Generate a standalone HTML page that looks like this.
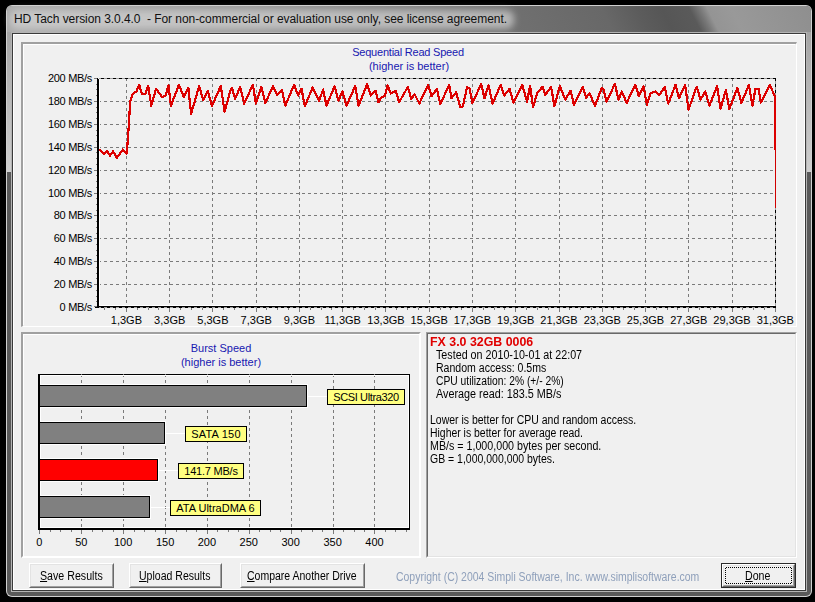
<!DOCTYPE html>
<html><head><meta charset="utf-8"><style>
*{margin:0;padding:0;box-sizing:border-box}
html,body{width:815px;height:602px;overflow:hidden;background:#000}
body{position:relative;font-family:"Liberation Sans",sans-serif}
.a{position:absolute}
.t{position:absolute;white-space:pre;font-size:11px;line-height:13px;color:#000}
</style></head><body>

<svg class="a" style="left:0;top:0" width="815" height="602">
<defs>
<linearGradient id="tb" gradientUnits="userSpaceOnUse" x1="0" y1="0" x2="815" y2="0" gradientTransform="skewX(27)">
<stop offset="0.0000" stop-color="#acacac"/>
<stop offset="0.3031" stop-color="#989898"/>
<stop offset="0.6160" stop-color="#707070"/>
<stop offset="0.7325" stop-color="#686868"/>
<stop offset="0.7755" stop-color="#5c5c5c"/>
<stop offset="0.8061" stop-color="#565656"/>
<stop offset="0.8405" stop-color="#5a5a5a"/>
<stop offset="0.8528" stop-color="#787878"/>
<stop offset="0.8626" stop-color="#949494"/>
<stop offset="0.8920" stop-color="#999999"/>
<stop offset="0.9963" stop-color="#8e8e8e"/>
</linearGradient>
<linearGradient id="side" x1="0" y1="0" x2="0" y2="1">
<stop offset="0" stop-color="#a4a4a4"/>
<stop offset="1" stop-color="#cfcfcf"/>
</linearGradient>
<filter id="gl" x="-10%" y="-50%" width="120%" height="200%"><feGaussianBlur stdDeviation="3.5"/></filter>
</defs>
<rect x="6" y="5" width="806" height="592" rx="6" ry="6" fill="#d0d0d0"/>
<rect x="7" y="6" width="804" height="590" rx="5" ry="5" fill="#5a5a5a"/>
<path d="M7 32 V11 Q7 6 12 6 H806 Q811 6 811 11 V32 Z" fill="url(#tb)"/>
<rect x="10" y="10" width="504" height="19" rx="8" fill="#d4d4d4" opacity="0.7" filter="url(#gl)"/>
<rect x="7" y="32" width="4" height="140" fill="url(#side)"/>
<rect x="807" y="32" width="4" height="140" fill="url(#side)"/>
<rect x="11" y="32" width="796" height="560" fill="#b4b4b4"/>
<rect x="12" y="33" width="794" height="558" fill="#3a3a3a"/>
<rect x="13" y="34" width="792" height="556" fill="#ffffff"/>
<rect x="14" y="35" width="790" height="554" fill="#f0f0f0"/>
</svg>
<div class="t" style="left:14px;top:12px;font-size:12px;line-height:14px;letter-spacing:-0.06px;color:#101010">HD Tach version 3.0.4.0  - For non-commercial or evaluation use only, see license agreement.</div>
<div class="a" style="left:21px;top:42px;width:776px;height:285px;border-top:2px solid #a0a0a0;border-left:2px solid #a0a0a0;border-right:1px solid #fff;border-bottom:1px solid #fff"></div>
<div class="a" style="left:23px;top:44px;width:772px;height:281px;border-top:1px solid #fff;border-left:1px solid #fff"></div>
<div class="a" style="left:21px;top:332px;width:400px;height:226px;border-top:2px solid #a0a0a0;border-left:2px solid #a0a0a0;border-right:2px solid #fff;border-bottom:2px solid #fff"></div>
<div class="a" style="left:23px;top:334px;width:396px;height:222px;border-top:1px solid #fff;border-left:1px solid #fff"></div>
<div class="a" style="left:426px;top:332px;width:371px;height:226px;border-top:1px solid #a0a0a0;border-left:1px solid #a0a0a0;border-right:1px solid #fff;border-bottom:1px solid #fff"></div>
<div class="a" style="left:427px;top:333px;width:369px;height:224px;border-top:1px solid #696969;border-left:1px solid #696969;border-right:1px solid #e3e3e3;border-bottom:1px solid #e3e3e3"></div>
<svg class="a" style="left:0;top:0" width="815" height="602">
<g shape-rendering="crispEdges">
<line x1="98" y1="101.5" x2="775" y2="101.5" stroke="#7a7a7a" stroke-width="1" stroke-dasharray="3 3"/>
<line x1="98" y1="124.5" x2="775" y2="124.5" stroke="#7a7a7a" stroke-width="1" stroke-dasharray="3 3"/>
<line x1="98" y1="147.5" x2="775" y2="147.5" stroke="#7a7a7a" stroke-width="1" stroke-dasharray="3 3"/>
<line x1="98" y1="170.5" x2="775" y2="170.5" stroke="#7a7a7a" stroke-width="1" stroke-dasharray="3 3"/>
<line x1="98" y1="193.5" x2="775" y2="193.5" stroke="#7a7a7a" stroke-width="1" stroke-dasharray="3 3"/>
<line x1="98" y1="215.5" x2="775" y2="215.5" stroke="#7a7a7a" stroke-width="1" stroke-dasharray="3 3"/>
<line x1="98" y1="238.5" x2="775" y2="238.5" stroke="#7a7a7a" stroke-width="1" stroke-dasharray="3 3"/>
<line x1="98" y1="261.5" x2="775" y2="261.5" stroke="#7a7a7a" stroke-width="1" stroke-dasharray="3 3"/>
<line x1="98" y1="284.5" x2="775" y2="284.5" stroke="#7a7a7a" stroke-width="1" stroke-dasharray="3 3"/>
<line x1="126.5" y1="78" x2="126.5" y2="306" stroke="#7a7a7a" stroke-width="1" stroke-dasharray="3 3"/>
<line x1="169.5" y1="78" x2="169.5" y2="306" stroke="#7a7a7a" stroke-width="1" stroke-dasharray="3 3"/>
<line x1="212.5" y1="78" x2="212.5" y2="306" stroke="#7a7a7a" stroke-width="1" stroke-dasharray="3 3"/>
<line x1="256.5" y1="78" x2="256.5" y2="306" stroke="#7a7a7a" stroke-width="1" stroke-dasharray="3 3"/>
<line x1="299.5" y1="78" x2="299.5" y2="306" stroke="#7a7a7a" stroke-width="1" stroke-dasharray="3 3"/>
<line x1="342.5" y1="78" x2="342.5" y2="306" stroke="#7a7a7a" stroke-width="1" stroke-dasharray="3 3"/>
<line x1="385.5" y1="78" x2="385.5" y2="306" stroke="#7a7a7a" stroke-width="1" stroke-dasharray="3 3"/>
<line x1="429.5" y1="78" x2="429.5" y2="306" stroke="#7a7a7a" stroke-width="1" stroke-dasharray="3 3"/>
<line x1="472.5" y1="78" x2="472.5" y2="306" stroke="#7a7a7a" stroke-width="1" stroke-dasharray="3 3"/>
<line x1="515.5" y1="78" x2="515.5" y2="306" stroke="#7a7a7a" stroke-width="1" stroke-dasharray="3 3"/>
<line x1="559.5" y1="78" x2="559.5" y2="306" stroke="#7a7a7a" stroke-width="1" stroke-dasharray="3 3"/>
<line x1="602.5" y1="78" x2="602.5" y2="306" stroke="#7a7a7a" stroke-width="1" stroke-dasharray="3 3"/>
<line x1="645.5" y1="78" x2="645.5" y2="306" stroke="#7a7a7a" stroke-width="1" stroke-dasharray="3 3"/>
<line x1="688.5" y1="78" x2="688.5" y2="306" stroke="#7a7a7a" stroke-width="1" stroke-dasharray="3 3"/>
<line x1="732.5" y1="78" x2="732.5" y2="306" stroke="#7a7a7a" stroke-width="1" stroke-dasharray="3 3"/>
<rect x="99" y="78" width="677" height="1" fill="#a0a0a0"/>
<line x1="95" y1="78.5" x2="776" y2="78.5" stroke="#000" stroke-width="1" stroke-dasharray="3 3"/>
<rect x="775" y="78" width="1" height="229" fill="#a0a0a0"/>
<line x1="775.5" y1="78" x2="775.5" y2="306" stroke="#000" stroke-width="1" stroke-dasharray="3 3"/>
<rect x="94" y="78" width="3" height="1" fill="#7a7a7a"/>
<rect x="96" y="84" width="1" height="1" fill="#7a7a7a"/>
<rect x="96" y="89" width="1" height="1" fill="#7a7a7a"/>
<rect x="96" y="95" width="1" height="1" fill="#7a7a7a"/>
<rect x="94" y="101" width="3" height="1" fill="#7a7a7a"/>
<rect x="96" y="107" width="1" height="1" fill="#7a7a7a"/>
<rect x="96" y="112" width="1" height="1" fill="#7a7a7a"/>
<rect x="96" y="118" width="1" height="1" fill="#7a7a7a"/>
<rect x="94" y="124" width="3" height="1" fill="#7a7a7a"/>
<rect x="96" y="130" width="1" height="1" fill="#7a7a7a"/>
<rect x="96" y="135" width="1" height="1" fill="#7a7a7a"/>
<rect x="96" y="141" width="1" height="1" fill="#7a7a7a"/>
<rect x="94" y="147" width="3" height="1" fill="#7a7a7a"/>
<rect x="96" y="152" width="1" height="1" fill="#7a7a7a"/>
<rect x="96" y="158" width="1" height="1" fill="#7a7a7a"/>
<rect x="96" y="164" width="1" height="1" fill="#7a7a7a"/>
<rect x="94" y="170" width="3" height="1" fill="#7a7a7a"/>
<rect x="96" y="175" width="1" height="1" fill="#7a7a7a"/>
<rect x="96" y="181" width="1" height="1" fill="#7a7a7a"/>
<rect x="96" y="187" width="1" height="1" fill="#7a7a7a"/>
<rect x="94" y="193" width="3" height="1" fill="#7a7a7a"/>
<rect x="96" y="198" width="1" height="1" fill="#7a7a7a"/>
<rect x="96" y="204" width="1" height="1" fill="#7a7a7a"/>
<rect x="96" y="210" width="1" height="1" fill="#7a7a7a"/>
<rect x="94" y="215" width="3" height="1" fill="#7a7a7a"/>
<rect x="96" y="221" width="1" height="1" fill="#7a7a7a"/>
<rect x="96" y="227" width="1" height="1" fill="#7a7a7a"/>
<rect x="96" y="233" width="1" height="1" fill="#7a7a7a"/>
<rect x="94" y="238" width="3" height="1" fill="#7a7a7a"/>
<rect x="96" y="244" width="1" height="1" fill="#7a7a7a"/>
<rect x="96" y="250" width="1" height="1" fill="#7a7a7a"/>
<rect x="96" y="255" width="1" height="1" fill="#7a7a7a"/>
<rect x="94" y="261" width="3" height="1" fill="#7a7a7a"/>
<rect x="96" y="267" width="1" height="1" fill="#7a7a7a"/>
<rect x="96" y="273" width="1" height="1" fill="#7a7a7a"/>
<rect x="96" y="278" width="1" height="1" fill="#7a7a7a"/>
<rect x="94" y="284" width="3" height="1" fill="#7a7a7a"/>
<rect x="96" y="290" width="1" height="1" fill="#7a7a7a"/>
<rect x="96" y="296" width="1" height="1" fill="#7a7a7a"/>
<rect x="96" y="301" width="1" height="1" fill="#7a7a7a"/>
<rect x="94" y="306" width="3" height="1" fill="#7a7a7a"/>
<rect x="126" y="308" width="1" height="4" fill="#7a7a7a"/>
<rect x="169" y="308" width="1" height="4" fill="#7a7a7a"/>
<rect x="212" y="308" width="1" height="4" fill="#7a7a7a"/>
<rect x="256" y="308" width="1" height="4" fill="#7a7a7a"/>
<rect x="299" y="308" width="1" height="4" fill="#7a7a7a"/>
<rect x="342" y="308" width="1" height="4" fill="#7a7a7a"/>
<rect x="385" y="308" width="1" height="4" fill="#7a7a7a"/>
<rect x="429" y="308" width="1" height="4" fill="#7a7a7a"/>
<rect x="472" y="308" width="1" height="4" fill="#7a7a7a"/>
<rect x="515" y="308" width="1" height="4" fill="#7a7a7a"/>
<rect x="559" y="308" width="1" height="4" fill="#7a7a7a"/>
<rect x="602" y="308" width="1" height="4" fill="#7a7a7a"/>
<rect x="645" y="308" width="1" height="4" fill="#7a7a7a"/>
<rect x="688" y="308" width="1" height="4" fill="#7a7a7a"/>
<rect x="732" y="308" width="1" height="4" fill="#7a7a7a"/>
<rect x="775" y="308" width="1" height="4" fill="#7a7a7a"/>
<rect x="104" y="308" width="1" height="2" fill="#7a7a7a"/>
<rect x="115" y="308" width="1" height="2" fill="#7a7a7a"/>
<rect x="137" y="308" width="1" height="2" fill="#7a7a7a"/>
<rect x="148" y="308" width="1" height="2" fill="#7a7a7a"/>
<rect x="158" y="308" width="1" height="2" fill="#7a7a7a"/>
<rect x="180" y="308" width="1" height="2" fill="#7a7a7a"/>
<rect x="191" y="308" width="1" height="2" fill="#7a7a7a"/>
<rect x="202" y="308" width="1" height="2" fill="#7a7a7a"/>
<rect x="223" y="308" width="1" height="2" fill="#7a7a7a"/>
<rect x="234" y="308" width="1" height="2" fill="#7a7a7a"/>
<rect x="245" y="308" width="1" height="2" fill="#7a7a7a"/>
<rect x="266" y="308" width="1" height="2" fill="#7a7a7a"/>
<rect x="277" y="308" width="1" height="2" fill="#7a7a7a"/>
<rect x="288" y="308" width="1" height="2" fill="#7a7a7a"/>
<rect x="310" y="308" width="1" height="2" fill="#7a7a7a"/>
<rect x="321" y="308" width="1" height="2" fill="#7a7a7a"/>
<rect x="331" y="308" width="1" height="2" fill="#7a7a7a"/>
<rect x="353" y="308" width="1" height="2" fill="#7a7a7a"/>
<rect x="364" y="308" width="1" height="2" fill="#7a7a7a"/>
<rect x="375" y="308" width="1" height="2" fill="#7a7a7a"/>
<rect x="396" y="308" width="1" height="2" fill="#7a7a7a"/>
<rect x="407" y="308" width="1" height="2" fill="#7a7a7a"/>
<rect x="418" y="308" width="1" height="2" fill="#7a7a7a"/>
<rect x="440" y="308" width="1" height="2" fill="#7a7a7a"/>
<rect x="450" y="308" width="1" height="2" fill="#7a7a7a"/>
<rect x="461" y="308" width="1" height="2" fill="#7a7a7a"/>
<rect x="483" y="308" width="1" height="2" fill="#7a7a7a"/>
<rect x="494" y="308" width="1" height="2" fill="#7a7a7a"/>
<rect x="504" y="308" width="1" height="2" fill="#7a7a7a"/>
<rect x="526" y="308" width="1" height="2" fill="#7a7a7a"/>
<rect x="537" y="308" width="1" height="2" fill="#7a7a7a"/>
<rect x="548" y="308" width="1" height="2" fill="#7a7a7a"/>
<rect x="569" y="308" width="1" height="2" fill="#7a7a7a"/>
<rect x="580" y="308" width="1" height="2" fill="#7a7a7a"/>
<rect x="591" y="308" width="1" height="2" fill="#7a7a7a"/>
<rect x="613" y="308" width="1" height="2" fill="#7a7a7a"/>
<rect x="623" y="308" width="1" height="2" fill="#7a7a7a"/>
<rect x="634" y="308" width="1" height="2" fill="#7a7a7a"/>
<rect x="656" y="308" width="1" height="2" fill="#7a7a7a"/>
<rect x="667" y="308" width="1" height="2" fill="#7a7a7a"/>
<rect x="677" y="308" width="1" height="2" fill="#7a7a7a"/>
<rect x="699" y="308" width="1" height="2" fill="#7a7a7a"/>
<rect x="710" y="308" width="1" height="2" fill="#7a7a7a"/>
<rect x="721" y="308" width="1" height="2" fill="#7a7a7a"/>
<rect x="742" y="308" width="1" height="2" fill="#7a7a7a"/>
<rect x="753" y="308" width="1" height="2" fill="#7a7a7a"/>
<rect x="764" y="308" width="1" height="2" fill="#7a7a7a"/>
<rect x="99" y="79" width="1" height="227" fill="#fff"/>
<rect x="99" y="305" width="676" height="1" fill="#fff"/>
<rect x="97" y="79" width="2" height="229" fill="#000"/>
<rect x="97" y="306" width="679" height="1" fill="#000"/>
<rect x="99" y="307" width="677" height="1" fill="#a0a0a0"/>
<line x1="95" y1="307.5" x2="776" y2="307.5" stroke="#000" stroke-width="1" stroke-dasharray="3 3"/>
</g>
<path d="M99.0 149.2 L103.9 153.8 L107.0 151.0 L110.0 155.6 L113.1 151.3 L116.8 157.8 L122.9 149.5 L126.9 153.5 L127.9 137.8 L129.0 122.5 L130.1 102.3 L132.4 94.2 L134.4 92.2 L136.5 91.5 L139.2 84.7 L141.9 94.2 L145.2 94.2 L148.2 86.1 L151.3 105.7 L156.0 88.8 L162.1 96.9 L165.5 95.5 L168.5 85.4 L170.9 105.7 L179.0 84.7 L183.7 96.9 L188.4 88.1 L191.1 113.8 L199.2 86.1 L203.3 100.3 L207.6 90.8 L212.0 105.7 L220.8 86.1 L224.6 111.7 L230.9 88.8 L232.0 88.1 L235.1 98.9 L240.1 86.8 L244.2 103.6 L252.9 84.7 L255.9 103.6 L261.3 86.8 L265.4 103.0 L272.9 86.1 L277.0 94.9 L282.0 90.1 L285.3 105.7 L294.1 84.7 L298.2 95.5 L301.5 88.8 L304.9 106.3 L312.6 87.4 L319.1 100.9 L323.1 89.5 L326.5 105.7 L334.6 86.1 L338.4 100.9 L342.4 91.5 L346.5 105.7 L355.2 86.1 L358.6 105.7 L367.1 84.1 L370.8 95.5 L375.5 90.8 L378.5 102.3 L381.6 96.9 L384.9 96.2 L387.4 85.4 L391.0 93.5 L395.7 90.8 L399.1 102.3 L407.9 86.8 L411.2 98.9 L414.6 94.2 L419.3 103.6 L428.1 84.7 L431.5 96.2 L436.9 88.8 L440.3 104.3 L449.2 84.7 L451.5 98.2 L456.2 92.2 L460.2 107.0 L462.9 106.3 L467.0 87.4 L469.4 88.1 L472.4 103.0 L481.2 84.1 L484.5 98.2 L488.6 85.4 L492.6 103.6 L500.7 84.7 L504.1 95.5 L509.5 88.8 L513.5 103.0 L522.3 84.7 L527.0 101.6 L530.1 86.1 L533.1 107.0 L537.2 92.8 L542.6 86.8 L545.3 94.9 L551.1 86.8 L554.4 106.3 L559.8 86.1 L565.2 99.6 L570.6 90.8 L574.0 105.0 L582.8 86.8 L586.2 97.6 L589.5 93.5 L595.0 105.7 L601.7 88.1 L603.7 89.5 L606.4 101.6 L614.9 84.1 L618.5 99.6 L621.9 91.5 L626.6 103.0 L635.4 84.7 L638.8 96.2 L643.5 86.1 L646.9 105.0 L650.3 93.5 L655.4 91.5 L659.4 94.9 L664.8 86.8 L668.2 103.6 L675.6 84.7 L679.0 98.2 L685.1 84.7 L688.5 109.7 L696.6 86.8 L700.6 99.6 L705.3 91.5 L709.4 105.7 L717.1 86.1 L720.5 109.0 L725.9 90.1 L729.3 109.0 L737.4 88.1 L741.4 103.0 L748.9 85.0 L752.5 105.7 L755.4 88.9 L758.6 88.9 L760.9 102.6 L770.0 85.0 L773.6 93.6 L774.6 96.2 L775.0 150.0" fill="none" stroke="#dc0000" stroke-width="2.2" stroke-linejoin="round" shape-rendering="crispEdges"/>
<rect x="775" y="150" width="1" height="58" fill="#d00000" shape-rendering="crispEdges"/>
</svg>
<div class="t" style="left:322px;top:46px;width:172px;text-align:center;color:#1818b0;letter-spacing:-0.22px">Sequential Read Speed</div>
<div class="t" style="left:323px;top:60px;width:172px;text-align:center;color:#1818b0">(higher is better)</div>
<div class="t" style="left:22px;top:72px;width:70px;text-align:right;letter-spacing:-0.3px">200 MB/s</div>
<div class="t" style="left:22px;top:95px;width:70px;text-align:right;letter-spacing:-0.3px">180 MB/s</div>
<div class="t" style="left:22px;top:118px;width:70px;text-align:right;letter-spacing:-0.3px">160 MB/s</div>
<div class="t" style="left:22px;top:141px;width:70px;text-align:right;letter-spacing:-0.3px">140 MB/s</div>
<div class="t" style="left:22px;top:164px;width:70px;text-align:right;letter-spacing:-0.3px">120 MB/s</div>
<div class="t" style="left:22px;top:187px;width:70px;text-align:right;letter-spacing:-0.3px">100 MB/s</div>
<div class="t" style="left:22px;top:209px;width:70px;text-align:right;letter-spacing:-0.3px">80 MB/s</div>
<div class="t" style="left:22px;top:232px;width:70px;text-align:right;letter-spacing:-0.3px">60 MB/s</div>
<div class="t" style="left:22px;top:255px;width:70px;text-align:right;letter-spacing:-0.3px">40 MB/s</div>
<div class="t" style="left:22px;top:278px;width:70px;text-align:right;letter-spacing:-0.3px">20 MB/s</div>
<div class="t" style="left:22px;top:301px;width:70px;text-align:right;letter-spacing:-0.3px">0 MB/s</div>
<div class="t" style="left:96.4px;top:314px;width:60px;text-align:center">1,3GB</div>
<div class="t" style="left:139.7px;top:314px;width:60px;text-align:center">3,3GB</div>
<div class="t" style="left:182.9px;top:314px;width:60px;text-align:center">5,3GB</div>
<div class="t" style="left:226.2px;top:314px;width:60px;text-align:center">7,3GB</div>
<div class="t" style="left:269.4px;top:314px;width:60px;text-align:center">9,3GB</div>
<div class="t" style="left:312.7px;top:314px;width:60px;text-align:center">11,3GB</div>
<div class="t" style="left:356.0px;top:314px;width:60px;text-align:center">13,3GB</div>
<div class="t" style="left:399.2px;top:314px;width:60px;text-align:center">15,3GB</div>
<div class="t" style="left:442.5px;top:314px;width:60px;text-align:center">17,3GB</div>
<div class="t" style="left:485.7px;top:314px;width:60px;text-align:center">19,3GB</div>
<div class="t" style="left:529.0px;top:314px;width:60px;text-align:center">21,3GB</div>
<div class="t" style="left:572.3px;top:314px;width:60px;text-align:center">23,3GB</div>
<div class="t" style="left:615.5px;top:314px;width:60px;text-align:center">25,3GB</div>
<div class="t" style="left:658.8px;top:314px;width:60px;text-align:center">27,3GB</div>
<div class="t" style="left:702.0px;top:314px;width:60px;text-align:center">29,3GB</div>
<div class="t" style="left:745.3px;top:314px;width:60px;text-align:center">31,3GB</div>
<svg class="a" style="left:0;top:0" width="815" height="602"><g shape-rendering="crispEdges">
<rect x="38" y="374" width="372" height="1" fill="#000"/>
<rect x="409" y="374" width="1" height="156" fill="#000"/>
<line x1="81.5" y1="374" x2="81.5" y2="528" stroke="#7a7a7a" stroke-width="1" stroke-dasharray="3 3"/>
<line x1="123.5" y1="374" x2="123.5" y2="528" stroke="#7a7a7a" stroke-width="1" stroke-dasharray="3 3"/>
<line x1="165.5" y1="374" x2="165.5" y2="528" stroke="#7a7a7a" stroke-width="1" stroke-dasharray="3 3"/>
<line x1="207.5" y1="374" x2="207.5" y2="528" stroke="#7a7a7a" stroke-width="1" stroke-dasharray="3 3"/>
<line x1="249.5" y1="374" x2="249.5" y2="528" stroke="#7a7a7a" stroke-width="1" stroke-dasharray="3 3"/>
<line x1="291.5" y1="374" x2="291.5" y2="528" stroke="#7a7a7a" stroke-width="1" stroke-dasharray="3 3"/>
<line x1="333.5" y1="374" x2="333.5" y2="528" stroke="#7a7a7a" stroke-width="1" stroke-dasharray="3 3"/>
<line x1="374.5" y1="374" x2="374.5" y2="528" stroke="#7a7a7a" stroke-width="1" stroke-dasharray="3 3"/>
<rect x="39" y="530" width="1" height="4" fill="#7a7a7a"/>
<rect x="50" y="530" width="1" height="2" fill="#7a7a7a"/>
<rect x="60" y="530" width="1" height="2" fill="#7a7a7a"/>
<rect x="71" y="530" width="1" height="2" fill="#7a7a7a"/>
<rect x="81" y="530" width="1" height="4" fill="#7a7a7a"/>
<rect x="92" y="530" width="1" height="2" fill="#7a7a7a"/>
<rect x="102" y="530" width="1" height="2" fill="#7a7a7a"/>
<rect x="113" y="530" width="1" height="2" fill="#7a7a7a"/>
<rect x="123" y="530" width="1" height="4" fill="#7a7a7a"/>
<rect x="134" y="530" width="1" height="2" fill="#7a7a7a"/>
<rect x="144" y="530" width="1" height="2" fill="#7a7a7a"/>
<rect x="155" y="530" width="1" height="2" fill="#7a7a7a"/>
<rect x="165" y="530" width="1" height="4" fill="#7a7a7a"/>
<rect x="176" y="530" width="1" height="2" fill="#7a7a7a"/>
<rect x="186" y="530" width="1" height="2" fill="#7a7a7a"/>
<rect x="196" y="530" width="1" height="2" fill="#7a7a7a"/>
<rect x="207" y="530" width="1" height="4" fill="#7a7a7a"/>
<rect x="217" y="530" width="1" height="2" fill="#7a7a7a"/>
<rect x="228" y="530" width="1" height="2" fill="#7a7a7a"/>
<rect x="238" y="530" width="1" height="2" fill="#7a7a7a"/>
<rect x="249" y="530" width="1" height="4" fill="#7a7a7a"/>
<rect x="259" y="530" width="1" height="2" fill="#7a7a7a"/>
<rect x="270" y="530" width="1" height="2" fill="#7a7a7a"/>
<rect x="280" y="530" width="1" height="2" fill="#7a7a7a"/>
<rect x="291" y="530" width="1" height="4" fill="#7a7a7a"/>
<rect x="301" y="530" width="1" height="2" fill="#7a7a7a"/>
<rect x="312" y="530" width="1" height="2" fill="#7a7a7a"/>
<rect x="322" y="530" width="1" height="2" fill="#7a7a7a"/>
<rect x="333" y="530" width="1" height="4" fill="#7a7a7a"/>
<rect x="343" y="530" width="1" height="2" fill="#7a7a7a"/>
<rect x="354" y="530" width="1" height="2" fill="#7a7a7a"/>
<rect x="364" y="530" width="1" height="2" fill="#7a7a7a"/>
<rect x="374" y="530" width="1" height="4" fill="#7a7a7a"/>
<rect x="385" y="530" width="1" height="2" fill="#7a7a7a"/>
<rect x="395" y="530" width="1" height="2" fill="#7a7a7a"/>
<rect x="406" y="530" width="1" height="2" fill="#7a7a7a"/>
<rect x="40" y="375" width="368" height="1" fill="#fff"/>
<rect x="40" y="375" width="1" height="153" fill="#fff"/>
<rect x="40" y="527" width="368" height="1" fill="#fff"/>
<rect x="408" y="375" width="1" height="153" fill="#fff"/>
<rect x="40" y="384" width="268" height="24" fill="#fff"/>
<rect x="40" y="421" width="126" height="24" fill="#fff"/>
<rect x="40" y="458" width="119" height="24" fill="#fff"/>
<rect x="40" y="495" width="111" height="24" fill="#fff"/>
<rect x="40" y="385" width="267" height="22" fill="#000"/>
<rect x="40" y="386" width="266" height="20" fill="#808080"/>
<rect x="40" y="422" width="125" height="22" fill="#000"/>
<rect x="40" y="423" width="124" height="20" fill="#808080"/>
<rect x="40" y="459" width="118" height="22" fill="#000"/>
<rect x="40" y="460" width="117" height="20" fill="#ff0000"/>
<rect x="40" y="496" width="110" height="22" fill="#000"/>
<rect x="40" y="497" width="109" height="20" fill="#808080"/>
<rect x="38" y="374" width="2" height="156" fill="#000"/>
<rect x="38" y="528" width="372" height="2" fill="#000"/>
</g></svg>
<div class="a" style="left:307px;top:396px;width:20px;height:1px;background:#fff"></div>
<div class="t" style="left:327px;top:389px;width:78px;height:16px;border:1px solid #000;background:#ffff80;text-align:center;line-height:14px;letter-spacing:-0.36px">SCSI Ultra320</div>
<div class="a" style="left:165px;top:433px;width:20px;height:1px;background:#fff"></div>
<div class="t" style="left:185px;top:426px;width:62px;height:16px;border:1px solid #000;background:#ffff80;text-align:center;line-height:14px;letter-spacing:0.19px">SATA 150</div>
<div class="a" style="left:158px;top:470px;width:20px;height:1px;background:#fff"></div>
<div class="t" style="left:178px;top:463px;width:66px;height:16px;border:1px solid #000;background:#ffff80;text-align:center;line-height:14px;letter-spacing:-0.21px">141.7 MB/s</div>
<div class="a" style="left:150px;top:507px;width:20px;height:1px;background:#fff"></div>
<div class="t" style="left:170px;top:500px;width:91px;height:16px;border:1px solid #000;background:#ffff80;text-align:center;line-height:14px;letter-spacing:0.0px">ATA UltraDMA 6</div>
<div class="t" style="left:160px;top:342px;width:122px;text-align:center;color:#1818b0">Burst Speed</div>
<div class="t" style="left:160px;top:356px;width:122px;text-align:center;color:#1818b0">(higher is better)</div>
<div class="t" style="left:19.4px;top:536px;width:40px;text-align:center">0</div>
<div class="t" style="left:61.3px;top:536px;width:40px;text-align:center">50</div>
<div class="t" style="left:103.2px;top:536px;width:40px;text-align:center">100</div>
<div class="t" style="left:145.1px;top:536px;width:40px;text-align:center">150</div>
<div class="t" style="left:186.9px;top:536px;width:40px;text-align:center">200</div>
<div class="t" style="left:228.8px;top:536px;width:40px;text-align:center">250</div>
<div class="t" style="left:270.7px;top:536px;width:40px;text-align:center">300</div>
<div class="t" style="left:312.6px;top:536px;width:40px;text-align:center">350</div>
<div class="t" style="left:354.5px;top:536px;width:40px;text-align:center">400</div>
<div class="t" style="left:430px;top:335.5px;font-size:12px;font-weight:bold;color:#e00000;transform:scaleX(1.0314);transform-origin:0 0">FX 3.0 32GB 0006</div>
<div class="t" style="left:436px;top:348.5px;font-size:12px;transform:scaleX(0.8937);transform-origin:0 0">Tested on 2010-10-01 at 22:07</div>
<div class="t" style="left:436px;top:361.5px;font-size:12px;transform:scaleX(0.8797);transform-origin:0 0">Random access: 0.5ms</div>
<div class="t" style="left:436px;top:374.5px;font-size:12px;transform:scaleX(0.8574);transform-origin:0 0">CPU utilization: 2% (+/- 2%)</div>
<div class="t" style="left:436px;top:387.5px;font-size:12px;transform:scaleX(0.9001);transform-origin:0 0">Average read: 183.5 MB/s</div>
<div class="t" style="left:430px;top:413.5px;font-size:12px;transform:scaleX(0.8729);transform-origin:0 0">Lower is better for CPU and random access.</div>
<div class="t" style="left:430px;top:426.5px;font-size:12px;transform:scaleX(0.8689);transform-origin:0 0">Higher is better for average read.</div>
<div class="t" style="left:430px;top:439.5px;font-size:12px;transform:scaleX(0.8901);transform-origin:0 0">MB/s = 1,000,000 bytes per second.</div>
<div class="t" style="left:430px;top:452.5px;font-size:12px;transform:scaleX(0.8735);transform-origin:0 0">GB = 1,000,000,000 bytes.</div>
<div class="a" style="left:29px;top:563px;width:85px;height:25px;border-top:1px solid #fff;border-left:1px solid #fff;border-right:1px solid #696969;border-bottom:1px solid #696969;background:#f0f0f0"></div>
<div class="a" style="left:30px;top:564px;width:83px;height:23px;border-top:1px solid #e3e3e3;border-left:1px solid #e3e3e3;border-right:1px solid #a0a0a0;border-bottom:1px solid #a0a0a0"></div>
<div class="t" style="left:39.800000000000004px;top:569.8px;font-size:12px;transform:scaleX(0.8868);transform-origin:0 0"><u>S</u>ave Results</div>
<div class="a" style="left:129px;top:563px;width:93px;height:25px;border-top:1px solid #fff;border-left:1px solid #fff;border-right:1px solid #696969;border-bottom:1px solid #696969;background:#f0f0f0"></div>
<div class="a" style="left:130px;top:564px;width:91px;height:23px;border-top:1px solid #e3e3e3;border-left:1px solid #e3e3e3;border-right:1px solid #a0a0a0;border-bottom:1px solid #a0a0a0"></div>
<div class="t" style="left:138.89999999999998px;top:569.8px;font-size:12px;transform:scaleX(0.8774);transform-origin:0 0"><u>U</u>pload Results</div>
<div class="a" style="left:240px;top:563px;width:125px;height:25px;border-top:1px solid #fff;border-left:1px solid #fff;border-right:1px solid #696969;border-bottom:1px solid #696969;background:#f0f0f0"></div>
<div class="a" style="left:241px;top:564px;width:123px;height:23px;border-top:1px solid #e3e3e3;border-left:1px solid #e3e3e3;border-right:1px solid #a0a0a0;border-bottom:1px solid #a0a0a0"></div>
<div class="t" style="left:246.6px;top:569.8px;font-size:12px;transform:scaleX(0.8749);transform-origin:0 0"><u>C</u>ompare Another Drive</div>
<div class="a" style="left:721px;top:563px;width:75px;height:25px;background:#2a2a2a"></div>
<div class="a" style="left:722px;top:564px;width:73px;height:23px;border-top:1px solid #fff;border-left:1px solid #fff;border-right:1px solid #696969;border-bottom:1px solid #696969;background:#f0f0f0"></div>
<div class="a" style="left:723px;top:565px;width:71px;height:21px;border-top:1px solid #e3e3e3;border-left:1px solid #e3e3e3;border-right:1px solid #a0a0a0;border-bottom:1px solid #a0a0a0"></div>
<div class="t" style="left:745.0px;top:569.8px;font-size:12px;transform:scaleX(0.8853);transform-origin:0 0"><u>D</u>one</div>
<svg class="a" style="left:725px;top:567px" width="67" height="17"><g shape-rendering="crispEdges" stroke="#000" stroke-width="1" stroke-dasharray="1 1" fill="none"><line x1="1" y1="0.5" x2="66" y2="0.5"/><line x1="1" y1="16.5" x2="66" y2="16.5"/><line x1="0.5" y1="1" x2="0.5" y2="16"/><line x1="66.5" y1="1" x2="66.5" y2="16"/></g></svg>
<div class="t" style="left:396px;top:570.5px;font-size:12px;color:#8fa0bb;transform:scaleX(0.8713);transform-origin:0 0">Copyright (C) 2004 Simpli Software, Inc. www.simplisoftware.com</div>
</body></html>
